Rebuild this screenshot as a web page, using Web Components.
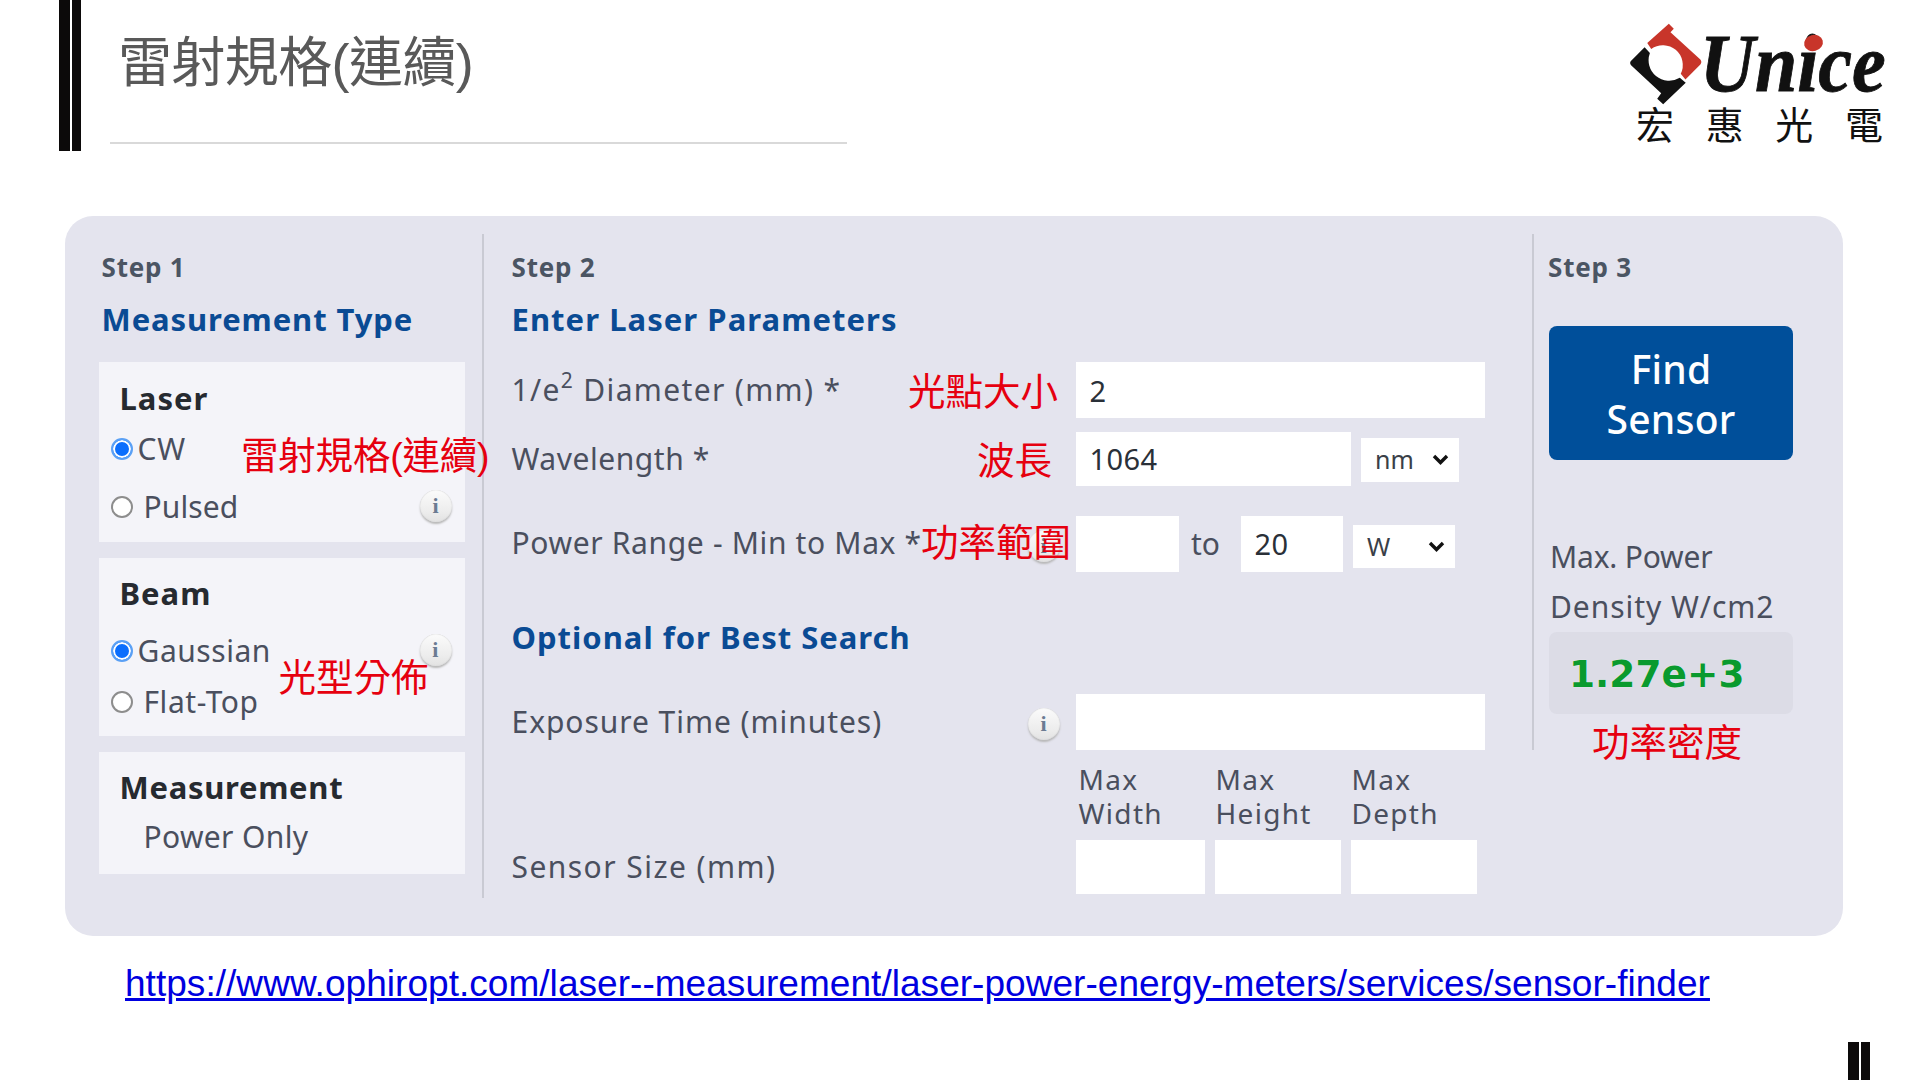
<!DOCTYPE html>
<html lang="zh-Hant"><head><meta charset="utf-8"><title>Sensor Finder</title>
<style>
html,body{margin:0;padding:0;background:#fff}
body{width:1920px;height:1080px;overflow:hidden;font-family:"Noto Sans","Noto Sans CJK TC",sans-serif}
</style></head><body>
<slide-page></slide-page>
<script>
const def=(name,css,html)=>{
  customElements.define(name,class extends HTMLElement{
    constructor(){super();const r=this.attachShadow({mode:'open'});r.innerHTML='<style>'+css+'</style>'+html;}
  });
};
const SANS='"Noto Sans","Noto Sans CJK TC",sans-serif';
const CJK='"Liberation Sans","Noto Sans CJK TC",sans-serif';

def('side-bars',`:host{display:flex;gap:2px;flex:none}
 i{display:block;background:#0c0a0a;height:100%}
 i:nth-of-type(1){width:11px} i:nth-of-type(2){width:9px}`,'<i></i><i></i>');

def('unice-logo',`:host{display:block;position:relative;width:300px;height:151px;flex:none}
 svg{position:absolute;left:10px;top:23px;width:73px;height:82px}
 .u{position:absolute;left:80px;top:28px;font:italic bold 76px/70px "Liberation Serif",serif;color:#111;-webkit-text-stroke:.8px #111;transform:scaleY(1.08);transform-origin:left center;white-space:nowrap}
 .i{position:absolute;left:184px;top:35px;width:19px;height:16px;border-radius:50%;background:#c8352a;transform:rotate(-15deg)}
 .c{position:absolute;left:16px;top:104px;width:247px;display:flex;justify-content:space-between;font:38px/38px "Noto Sans CJK TC",sans-serif;color:#111}
 `,`<svg viewBox="28 40 220 247"><path fill="#c8352a" d="M80,100 L145,42 L160,57 L150,68 L240,150 Q246,157 240,165 L195,210 L181,193 A60,60 0 0 0 92,118 Z"/><path fill="#111" d="M72,113 L30,155 Q26,162 32,168 L122,252 L110,268 L128,285 L196,220 L178,205 A62,62 0 0 1 88,130 Z"/></svg>
 <div class="u">Unice</div><div class="i"></div><div class="c"><span>宏</span><span>惠</span><span>光</span><span>電</span></div>`);

def('slide-header',`:host{display:flex;height:151px;padding-left:59px;box-sizing:border-box}
 .m{margin-left:29px;width:737px;border-bottom:2px solid #d9d9d9;box-sizing:border-box;height:144px}
 h1{margin:30px 0 0 8px;font:400 54px/66px ${CJK};color:#595959;letter-spacing:-.6px;white-space:nowrap}
 .sp{flex:1}
 `,`<side-bars></side-bars><div class="m"><h1>雷射規格(連續)</h1></div><div class="sp"></div><unice-logo></unice-logo>`);

def('info-dot',`:host{display:inline-flex;width:32px;height:32px;border-radius:50%;align-items:center;justify-content:center;box-sizing:border-box;background:linear-gradient(#fbfbfb,#ececec 70%,#e2e2e2);box-shadow:0 2px 2px #b9b9b9,inset 0 0 1px #bbb;font:700 22px/1 "Liberation Serif",serif;color:#6b7b92}`,`i`);

def('step-label',`:host{display:block;height:34px;margin-top:16px;font:700 26px/34px ${SANS};color:#4b5563;letter-spacing:.8px;white-space:nowrap}`,'<slot></slot>');
def('sec-title',`:host{display:block;height:44px;font:700 31px/44px ${SANS};color:#0a4b94;letter-spacing:.9px;white-space:nowrap}`,'<slot></slot>');

def('opt-panel',`:host{display:block;position:relative;background:#f4f4f9;width:366px;box-sizing:border-box;margin-bottom:16px}
 .h{height:40px;padding-left:21px;font:700 31px/40px ${SANS};letter-spacing:1px;color:#262a30;white-space:nowrap}`,
 `<div class="h"><slot name="h"></slot></div><slot></slot>`);

def('radio-row',`:host{display:flex;align-items:center;height:40px;padding-left:12px;font:400 30px/40px ${SANS};color:#4a4f5e;white-space:nowrap;position:relative}
 .r{width:22px;height:22px;border-radius:50%;box-sizing:border-box;border:2px solid #8d8d8d;background:#fff;flex:none;margin-right:11px}
 :host([on]) .r{border:2px solid #5aa0f5;background:#0b6efd;box-shadow:inset 0 0 0 2px #fff;margin-right:5px}
 :host([plain]) .r{visibility:hidden}
 ::slotted(info-dot){position:absolute;left:321px;top:3px}`,
 `<span class="r"></span><slot></slot><slot name="dot"></slot>`);

def('field-box',`:host{background:#fff;box-sizing:border-box;flex:none;padding-left:13.5px;font:400 29px/1 ${SANS};letter-spacing:.4px;color:#2a3038;display:flex;align-items:center;white-space:nowrap;overflow:hidden}`,'<slot></slot>');

def('unit-select',`:host{display:flex;background:#fff;box-sizing:border-box;flex:none;align-items:center;justify-content:space-between;padding:0 10px 0 14px;font:400 25px/1 ${SANS};color:#3a3f48}
 svg{width:17px;height:11px}`,
 `<slot></slot><svg viewBox="0 0 17 11"><path d="M2 2 L8.5 8.5 L15 2" fill="none" stroke="#111" stroke-width="3.4"/></svg>`);

def('form-row',`:host{display:flex;align-items:center;position:relative;font:400 30px/40px ${SANS};color:#4a4f5e;white-space:nowrap}
 .l{width:564.5px;flex:none;position:relative}`,
 `<div class="l"><slot name="label"></slot></div><slot></slot>`);

def('red-note',`:host{display:block;position:absolute;font:400 37.5px/44px ${CJK};color:#e6000f;white-space:nowrap;z-index:5}`,'<slot></slot>');

def('column-one',`:host{display:block;width:419px;box-sizing:border-box;padding-left:33.5px;border-right:2px solid #c9cad3;height:664px;flex:none;position:relative}
 .t{padding-left:3px}.g{height:21px}`,
 `<div class="t"><step-label>Step 1</step-label><div style="height:13px"></div><sec-title>Measurement Type</sec-title></div><div class="g"></div>
 <opt-panel style="height:180px;padding-top:16px">
   <span slot="h">Laser</span>
   <radio-row on style="margin-top:11px;letter-spacing:.9px">CW</radio-row>
   <radio-row style="margin-top:18px;letter-spacing:.1px">Pulsed<info-dot slot="dot"></info-dot></radio-row>
 </opt-panel>
 <opt-panel style="height:178px;padding-top:15px">
   <span slot="h">Beam</span>
   <radio-row on style="margin-top:18px;letter-spacing:.55px">Gaussian<info-dot slot="dot"></info-dot></radio-row>
   <radio-row style="margin-top:11px;letter-spacing:.55px">Flat-Top</radio-row>
 </opt-panel>
 <opt-panel style="height:122px;padding-top:15px;margin-bottom:0">
   <span slot="h" style="letter-spacing:.7px">Measurement</span>
   <radio-row plain style="margin-top:10px;letter-spacing:.35px">Power Only</radio-row>
 </opt-panel>
 <red-note style="left:176px;top:200px;letter-spacing:-.2px">雷射規格(連續)</red-note>
 <red-note style="left:213.5px;top:422px">光型分佈</red-note>`);

def('column-two',`:host{display:block;width:1048px;box-sizing:border-box;padding-left:27.5px;height:664px;flex:none;position:relative}
 .t{margin-bottom:21px}
 .max{display:flex;padding-left:567px;font:400 28px/34px ${SANS};letter-spacing:1.3px;color:#4a4f5e;height:70px;margin-top:12px}
 .max div{width:137px;white-space:pre-line}
 .max div:nth-child(2){width:136px}
 `,
 `<div class="t"><step-label>Step 2</step-label><div style="height:13px"></div><sec-title style="letter-spacing:1.05px">Enter Laser Parameters</sec-title></div>
 <form-row style="height:56px"><span slot="label" style="letter-spacing:1.35px">1/e<sup style="font-size:21px;line-height:0;position:relative;top:-2px">2</sup> Diameter (mm) *</span><field-box style="width:409px;height:56px">2</field-box></form-row>
 <form-row style="height:53.5px;margin-top:14px"><span slot="label" style="letter-spacing:.55px">Wavelength *</span><field-box style="width:275px;height:53.5px">1064</field-box><unit-select style="width:98px;height:44px;margin-left:10px;margin-top:2px">nm</unit-select></form-row>
 <form-row style="height:56.5px;margin-top:30px"><span slot="label" style="letter-spacing:.65px;display:block;margin-top:-2px">Power Range - Min to Max *</span><info-dot style="position:absolute;left:516px;top:14px"></info-dot><field-box style="width:103px;height:56.5px"></field-box><span style="width:62px;padding-left:12px;box-sizing:border-box">to</span><field-box style="width:102px;height:56.5px">20</field-box><unit-select style="width:102px;height:43px;margin-left:10px;margin-top:4.5px">W</unit-select></form-row>
 <div style="height:43px"></div>
 <sec-title style="letter-spacing:1px">Optional for Best Search</sec-title>
 <div style="height:35px"></div>
 <form-row style="height:56px"><span slot="label" style="letter-spacing:.95px;display:block;margin-top:-1px">Exposure Time (minutes)</span><info-dot style="position:absolute;left:516px;top:14px"></info-dot><field-box style="width:409px;height:56px"></field-box></form-row>
 <div class="max"><div>Max
Width</div><div>Max
Height</div><div>Max
Depth</div></div>
 <form-row style="height:54px;margin-top:8px"><span slot="label" style="letter-spacing:1.45px">Sensor Size (mm)</span><field-box style="width:129px;height:54px"></field-box><field-box style="width:126px;height:54px;margin-left:10px"></field-box><field-box style="width:126px;height:54px;margin-left:10px"></field-box></form-row>
 <red-note style="left:424px;top:136px">光點大小</red-note>
 <red-note style="left:493px;top:205px">波長</red-note>
 <red-note style="left:437px;top:287px">功率範圍</red-note>`);

def('find-button',`:host{display:block;width:244px;height:134px;margin:42px 0 0 1px;border-radius:8px;background:#004f9a;color:#fff;font:500 39px/50px ${SANS};letter-spacing:.2px;text-align:center;padding-top:18px;box-sizing:border-box}`,'<slot></slot>');

def('column-three',`:host{display:block;flex:1;box-sizing:border-box;padding-left:16px;position:relative}
 :host::before{content:"";position:absolute;left:0;top:0;width:2px;height:516px;background:#c9cad3}
 .t{font:400 30px/50px ${SANS};color:#4a4f5e;margin:72px 0 0 2px;height:100px;white-space:nowrap;letter-spacing:-.2px}
 .t span{letter-spacing:.95px}
 .v{width:244px;height:82px;margin-left:1px;border-radius:8px;background:#dcdce6;color:#0a9a2e;font:700 37.5px/85px "DejaVu Sans",sans-serif;padding-left:20px;box-sizing:border-box;text-shadow:0 0 1px #fff}`,
 `<step-label>Step 3</step-label><find-button>Find<br>Sensor</find-button>
 <div class="t">Max. Power<br><span>Density W/cm2</span></div><div class="v">1.27e+3</div>
 <red-note style="left:60px;top:487px">功率密度</red-note>`);

def('finder-card',`:host{display:flex;width:1778px;height:720px;margin:65px 0 0 65px;padding-top:18px;box-sizing:border-box;background:#e4e4ee;border-radius:28px}`,
 `<column-one></column-one><column-two></column-two><column-three></column-three>`);

def('link-line',`:host{display:block;margin:26px 0 0 125px;font:400 37px/44px "Liberation Sans",sans-serif;letter-spacing:.04px;white-space:nowrap}
 a{color:#0000e0;text-decoration:underline}`,
 `<a href="#">https://www.ophiropt.com/laser--measurement/laser-power-energy-meters/services/sensor-finder</a>`);

def('slide-page',`:host{display:block;width:1920px;height:1080px;position:relative;overflow:hidden;background:#fff}
 .end{display:flex;justify-content:flex-end;padding-right:50px;height:38px;margin-top:36px}`,
 `<slide-header></slide-header><finder-card></finder-card><link-line></link-line><div class="end"><side-bars></side-bars></div>`);
</script>
</body></html>
